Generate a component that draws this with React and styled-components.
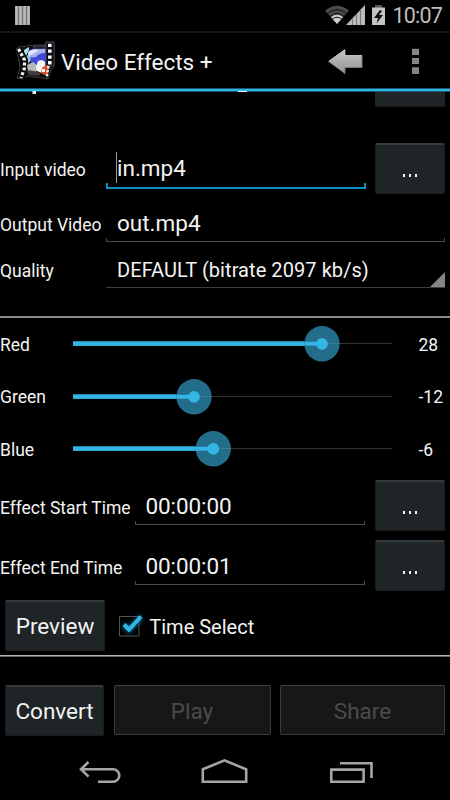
import React from 'react';
import styled, { createGlobalStyle } from 'styled-components';

const GlobalStyle = createGlobalStyle`
  * { box-sizing: border-box; }
  body { margin: 0; background: #000; font-family: Roboto, "Noto Sans", sans-serif; color: #f3f3f3; }
  svg { display: block; flex: none; }
`;

const Screen = styled.div`
  width: 450px; height: 800px; overflow: hidden; background: #000;
  display: flex; flex-direction: column;
`;
const StatusBar = styled.header`
  height: 33px; flex: none; display: flex; align-items: flex-start;
  padding: 0 8px 0 15px; border-bottom: 2px solid #141414;
`;
const StatusIcons = styled.div`margin-left: auto; display: flex;`;
const ActionBar = styled.div`
  height: 58px; flex: none; display: flex; align-items: flex-start; padding-left: 15px;
  border-bottom: 2px solid #33b5e5; box-shadow: inset 0 -1px #145a75, 0 1px #145a75;
`;
const ActionIcons = styled.div`margin-left: auto; display: flex; padding-right: 31px;`;
const LogoBox = styled.div`width: 46px; padding-top: 8px;`;
const Text = styled.span`
  display: block; flex: none; white-space: pre; line-height: 30px;
  font-size: ${p => p.$size || 17.5}px;
  letter-spacing: ${p => p.$spacing || 0}px;
  margin-top: ${p => p.$top || 0}px;
  margin-left: ${p => p.$left || 0}px;
  color: ${p => p.$color || '#f3f3f3'};
`;
const Content = styled.main`flex: none; height: 651px; display: flex; flex-direction: column;`;
const Row = styled.section`
  height: ${p => p.$height}px; flex: none; display: flex; align-items: flex-start;
`;
const LabelCell = styled.div`width: ${p => p.$width}px; flex: none;`;
const Field = styled.div`
  width: ${p => p.$width}px; height: ${p => p.$height}px; flex: none;
  display: flex; flex-direction: column; justify-content: space-between;
`;
const FieldText = styled.div`display: flex;`;
const Caret = styled.i`width: 1px; height: 31px; margin: 10px 0 0 10px; background: #999; flex: none;`;
const Underline = styled.div`
  height: ${p => (p.$focused ? 7 : 5)}px; border: solid ${p => (p.$focused ? '#0a91c4' : '#4b4b4b')};
  border-width: ${p => (p.$focused ? '0 2px 2px' : '0 1px 1px')};
`;
const Spinner = styled.div`
  width: 339px; height: 41px; display: flex; align-items: flex-start; justify-content: space-between;
  border-bottom: 1px solid #3d3d3d;
`;
const Corner = styled.svg`align-self: flex-end;`;
const Button = styled.button`
  width: ${p => p.$width}px; height: ${p => (p.disabled ? 50 : 51)}px; flex: none;
  padding: 0; margin: ${p => p.$margin || 0};
  font-family: inherit; display: flex; justify-content: center; align-items: flex-start;
  background: ${p => (p.disabled ? '#171717' : '#1f2427')};
  border: 1px solid ${p => (p.disabled ? '#3b3b3b' : '#1a1d1f')};
  border-top: ${p => (p.disabled ? '1px solid #444' : '2px solid #343a3d')};
  border-radius: 2px;
`;
const ClippedButton = styled.div`
  width: 70px; height: 16px; margin-left: auto; margin-right: 5px;
  border-top: 1px solid #145a75;
  background: #1f2427; border-bottom: 1px solid #181b1d; border-radius: 0 0 2px 2px;
`;
const Dots = styled.i`
  display: flex; gap: 4px; margin-top: ${p => p.$top}px;
  &::before, &::after { content: ''; width: 2px; height: 3px; background: #f3f3f3; }
`;
const Dot = styled.i`width: 2px; height: 3px; background: #f3f3f3;`;
const Divider = styled.hr`
  margin: 0; border: 0; flex: none; height: 2px;
  background: ${p => (p.$bright ? 'linear-gradient(#b4b4b4 50%, #666 50%)' : '#8c8889')};
`;
const NavBar = styled.nav`
  flex: 1; display: flex; align-items: flex-start; padding: 16px 77px 0 78px; justify-content: space-between;
`;

function Slider({ value }) {
  return (
    <svg width="340" height="40" viewBox="0 0 340 40">
      <path d="M10 19.5H329.5" stroke="#303030" />
      <path d={`M10 19.5H${value}`} stroke="#2389ad" strokeWidth="5" />
      <path d={`M10 19.8H${value}`} stroke="#33b5e5" strokeWidth="3.8" />
      <circle cx={value} cy="19.8" r="17.7" fill="#216d8a" />
      <path d={`M${value} 19.5h17.5`} stroke="#397b93" />
      <path d={`M${value - 17.4} 19.7H${value}`} stroke="#33b5e5" strokeWidth="4" />
      <circle cx={value} cy="19.8" r="5.9" fill="#33b5e5" />
    </svg>
  );
}

function SliderRow({ label, number, value, height, top = 6 }) {
  return (
    <Row $height={height}>
      <LabelCell $width={63}><Text $top={top}>{label}</Text></LabelCell>
      <Slider value={value} />
      <Text $top={top} $left={15.5}>{number}</Text>
    </Row>
  );
}

function BrowseButton({ top, dotTop }) {
  return (
    <Button $width={70} $margin={`${top}px 5px 0 auto`} aria-label="Browse">
      <Dots $top={dotTop}><Dot /></Dots>
    </Button>
  );
}

function TimeRow({ label, value }) {
  return (
    <Row $height={60}>
      <LabelCell $width={135}><Text $top={13} $spacing={-0.05}>{label}</Text></LabelCell>
      <Field $width={230} $height={45}>
        <Text $size={22.5} $left={10.4} $top={11} $spacing={-0.08}>{value}</Text>
        <Underline />
      </Field>
      <BrowseButton top={0} dotTop={29} />
    </Row>
  );
}

function FilmLogo() {
  return (
    <svg width="40" height="40" viewBox="0 0 40 40">
      <path d="M1 8l4-3 4 1 5-2 5 1V4h12V1h8v24l-3 4-3 9-6-1-7-1-8-1-4 3-6-1 3-10-1-8z" fill="#0c0c0c" stroke="#4c4c4c" strokeWidth=".8" />
      <path d="M19 5h12v3H18z" fill="#20202c" stroke="#555a70" strokeWidth=".6" />
      <path d="M9 9l5-3v3l-3 6-2-2z" fill="#a9dfe0" />
      <path d="M14 9l4-1h13v16H17l-2-6h-3z" fill="#4248d8" />
      <path d="M13 11l5-3h12v4q-6 0-9 4l-8 1z" fill="#a8b0f2" />
      <path d="M14 10l5-1h5l-6 4-5 2z" fill="#e3e8ff" />
      <path d="M10 16l3-2 3 5-3 4z" fill="#8fd0d8" />
      <path d="M3.5 8l6 11v8L6 37" fill="none" stroke="#0a0a0a" strokeWidth="7" />
      <path d="M3.5 8l6 11v8L6 37" fill="none" stroke="#f0f0f0" strokeWidth="3.2" strokeDasharray="3 2" />
      <path d="M31 1h8v24h-8z" fill="#0b0b14" stroke="#55586a" strokeWidth=".7" />
      <path d="M33 2.7h3.6v3.4H33zM33 8.4h3.6v3.4H33zM33 14.4h3.6v3.4H33zM33 20h3.6v3.4H33z" fill="#fff" />
      <path d="M12 24l6-3 6 5-3 5-8-1z" fill="#b9b9b9" />
      <path d="M11 29l8 1 7 2-2 3-10-1z" fill="#3e3e3e" />
      <path d="M23 20l4-1 3 2v4l3 1-1 4-5 2-5-2-1-4z" fill="#f6f6f6" />
      <path d="M27 27l4-3 3 1-1 8-4 1-3-2z" fill="#dd4821" />
      <path d="M27 28h3v3h-3z" fill="#fff" />
      <path d="M33.5 25l-2 12" stroke="#eee" strokeWidth="2.4" strokeDasharray="2.5 1.5" />
    </svg>
  );
}

export default function App() {
  return (
    <Screen>
      <GlobalStyle />
      <StatusBar>
        <svg width="16" height="31" viewBox="0 0 16 31">
          <path d="M0 6h15v19H0z" fill="#777" />
          <path d="M1.5 6v19M5.5 6v19M9.5 6v19M13.5 6v19" stroke="#bcbcbc" strokeWidth="2.5" />
        </svg>
        <StatusIcons>
          <svg width="64" height="31" viewBox="0 0 64 31">
            <path d="M0 10.5Q12 1 24 10.5L12 24z" fill="#4a4a4a" />
            <path d="M6 17.2Q12 12.5 18 17.2L12 24z" fill="#cdcdcd" />
            <path d="M2.5 13.5Q12 5.8 21.5 13.5M5 16.3Q12 10.5 19 16.3M7.3 19Q12 15.5 16.7 19" fill="none" stroke="#111" strokeWidth="1" />
            <path d="M21 25L40 5v20z" fill="#bbb" />
            <path d="M27.5 18v7M31.5 14v11M35.5 9v16" stroke="#777" />
            <path d="M50 5h7v3h-7z" fill="#555" />
            <path d="M47 7.5h13V25H47z" fill="#c4c4c4" />
            <path d="M55 10l-6 8h4l-1.5 5.5L58 15h-4l3-4z" fill="#111" />
          </svg>
          <Text $size={21.5} $top={1} $left={3} $spacing={-0.8} $color="#bebebe">10:07</Text>
        </StatusIcons>
      </StatusBar>
      <ActionBar>
        <LogoBox><FilmLogo /></LogoBox>
        <Text $size={22.5} $top={14} $spacing={-0.03}>Video Effects +</Text>
        <ActionIcons>
          <svg width="92" height="56" viewBox="0 0 92 56">
            <defs><linearGradient id="arrow" x2="0" y2="1"><stop stopColor="#c5c5c5" /><stop offset="1" stopColor="#969696" /></linearGradient></defs>
            <path d="M1.5 28.5L18 16.5V22.5H35V34.5H18V40.5z" fill="url(#arrow)" stroke="#777" />
            <path d="M2 28L17.5 17V22.5H35" fill="none" stroke="#ddd" strokeWidth=".7" />
            <path d="M85 15.7h7V22h-7zM85 25h7v6h-7zM85 34.3h7V41h-7z" fill="#858585" />
          </svg>
        </ActionIcons>
      </ActionBar>
      <Content>
        <Row $height={51}>
          <svg width="250" height="3" viewBox="0 0 250 3"><path d="M32.5 0H36v3h-3.5z" fill="#eee" /><path d="M238 0h9v1h-9z" fill="#e6f7fc" /></svg>
          <ClippedButton />
        </Row>
        <Row $height={57}>
          <LabelCell $width={106}><Text $top={13}>Input video</Text></LabelCell>
          <Field $width={260} $height={47}>
            <FieldText><Caret /><Text $size={22.5} $top={11}>in.mp4</Text></FieldText>
            <Underline $focused />
          </Field>
          <BrowseButton top={1} dotTop={29} />
        </Row>
        <Row $height={48}>
          <LabelCell $width={106}><Text $top={11}>Output Video</Text></LabelCell>
          <Field $width={339} $height={43}>
            <Text $size={22.5} $left={11} $top={9}>out.mp4</Text>
            <Underline />
          </Field>
        </Row>
        <Row $height={69}>
          <LabelCell $width={106}><Text $top={9}>Quality</Text></LabelCell>
          <Spinner>
            <Text $size={20} $left={11} $top={8} $spacing={0.07}>DEFAULT (bitrate 2097 kb/s)</Text>
            <Corner width="15" height="15" viewBox="0 0 15 15"><path d="M15 0v15H0z" fill="#858585" /></Corner>
          </Spinner>
        </Row>
        <Divider />
        <Row $height={6} />
        <SliderRow height={53} label="Red" number="28" value={259} />
        <SliderRow height={52} top={5} label="Green" number="-12" value={131} />
        <SliderRow height={51} label="Blue" number="-6" value={150.3} />
        <TimeRow label="Effect Start Time" value="00:00:00" />
        <TimeRow label="Effect End Time" value="00:00:01" />
        <Row $height={55}>
          <Button $width={100} $margin="0 14px 0 5px"><Text $size={22.5} $top={9}>Preview</Text></Button>
          <svg width="31" height="42" viewBox="0 0 31 42">
            <defs><filter id="glow" x="-50%" y="-50%" width="200%" height="200%"><feGaussianBlur stdDeviation="2" /></filter></defs>
            <path d="M.5 16.5h19.5v19.5H.5z" fill="none" stroke="#555" />
            <path d="M5 25l5 5L22 17" fill="none" stroke="#08719a" strokeWidth="5" filter="url(#glow)" />
            <path d="M5 24.5l5 5L22 16.5" fill="none" stroke="#33b5e5" strokeWidth="4" />
          </svg>
          <Text $size={20} $top={12} $left={-0.7}>Time Select</Text>
        </Row>
        <Divider $bright />
        <Row $height={28} />
        <Row $height={60}>
          <Button $width={99} $margin="0 0 0 5px"><Text $size={22.5} $top={9}>Convert</Text></Button>
          <Button disabled $width={157} $margin="0 0 0 9.5px"><Text $size={22.5} $top={10} $color="#4b4b4b">Play</Text></Button>
          <Button disabled $width={165} $margin="0 0 0 9.5px"><Text $size={22.5} $top={10} $color="#4b4b4b">Share</Text></Button>
        </Row>
      </Content>
      <NavBar>
        <svg width="44" height="27" viewBox="0 0 44 27"><path d="M10.5 4L3 11.2l7.5 7.5M3.5 11.2H35a6.3 6.3 0 0 1 0 12.6H20" fill="none" stroke="#a5a5a5" strokeWidth="2.6" /></svg>
        <svg width="48" height="27" viewBox="0 0 48 27"><path d="M1.8 11.3L23.5 2.4l21.7 8.9v12.5H1.8z" fill="none" stroke="#a5a5a5" strokeWidth="2.6" /></svg>
        <svg width="45" height="27" viewBox="0 0 45 27"><path d="M3.3 11.6h32.3v12.2H3.3zM12 5.3h31.5V20" fill="none" stroke="#a5a5a5" strokeWidth="2.6" /></svg>
      </NavBar>
    </Screen>
  );
}
